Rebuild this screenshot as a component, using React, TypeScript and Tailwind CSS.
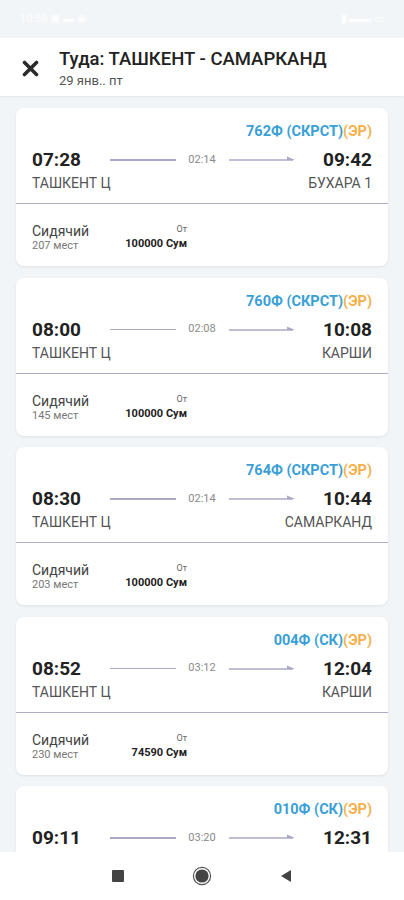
import React from "react";

type Trip = {
  code: string;
  kind: string;
  dep: string;
  arr: string;
  duration: string;
  from: string;
  to: string;
  seats: number;
  price: string;
};

const trips: Trip[] = [
  { code: "762Ф", kind: "(СКРСТ)", dep: "07:28", arr: "09:42", duration: "02:14", from: "ТАШКЕНТ Ц", to: "БУХАРА 1", seats: 207, price: "100000" },
  { code: "760Ф", kind: "(СКРСТ)", dep: "08:00", arr: "10:08", duration: "02:08", from: "ТАШКЕНТ Ц", to: "КАРШИ", seats: 145, price: "100000" },
  { code: "764Ф", kind: "(СКРСТ)", dep: "08:30", arr: "10:44", duration: "02:14", from: "ТАШКЕНТ Ц", to: "САМАРКАНД", seats: 203, price: "100000" },
  { code: "004Ф", kind: "(СК)", dep: "08:52", arr: "12:04", duration: "03:12", from: "ТАШКЕНТ Ц", to: "КАРШИ", seats: 230, price: "74590" },
  { code: "010Ф", kind: "(СК)", dep: "09:11", arr: "12:31", duration: "03:20", from: "ТАШКЕНТ Ц", to: "САМАРКАНД", seats: 198, price: "74590" },
];

function Arrow() {
  return (
    <svg width="66" height="8" viewBox="0 0 66 8">
      <line x1="0" y1="4" x2="64" y2="4" stroke="#a9a9c6" strokeWidth="1.6" />
      <path d="M58 0.5 L66 4 L58 4 Z" fill="#a9a9c6" />
    </svg>
  );
}

function TripCard({ trip }: { trip: Trip }) {
  return (
    <div className="shrink-0 h-[158px] rounded-lg bg-white shadow-[0_1px_3px_rgba(0,0,0,0.08)] overflow-hidden">
      <div className="px-4 pt-[14px] pb-[11px] border-b-[1.5px] border-[#adadc8]">
        <div className="h-5 leading-5 text-right text-[14.5px] font-bold">
          <span className="text-[#3a9fd6]">
            {trip.code} {trip.kind}
          </span>
          <span className="text-[#f5b04c]">(ЭР)</span>
        </div>
        <div className="mt-[6px] grid grid-cols-[1fr_185px_1fr] items-center h-6">
          <span className="text-[19px] font-bold text-[#222] leading-6">{trip.dep}</span>
          <div className="flex items-center justify-between">
            <div className="w-[66px] h-[1.6px] bg-[#a9a9c6]" />
            <span className="text-[11px] text-[#8a8a8a]">{trip.duration}</span>
            <Arrow />
          </div>
          <span className="text-right text-[19px] font-bold text-[#222] leading-6">{trip.arr}</span>
        </div>
        <div className="mt-[2px] flex justify-between text-[14px] leading-[18px] text-[#555]">
          <span>{trip.from}</span>
          <span>{trip.to}</span>
        </div>
      </div>
      <div className="flex px-4 pt-[19px]">
        <div className="w-[84px]">
          <div className="text-[14px] leading-4 text-[#444]">Сидячий</div>
          <div className="text-[11px] leading-[13px] text-[#777]">{trip.seats} мест</div>
        </div>
        <div className="w-[71px] text-right">
          <div className="text-[9px] leading-[13px] text-[#666]">От</div>
          <div className="text-[11px] leading-[16px] font-bold text-[#222]">{trip.price} Сум</div>
        </div>
      </div>
    </div>
  );
}

export default function App() {
  return (
    <div className="h-[900px] w-full flex flex-col overflow-hidden bg-[#f2f5f8] font-['Roboto',sans-serif]">
      <div className="h-[38px] shrink-0 flex items-center justify-between px-5 text-[11px] text-white/80">
        <span>10:56 ▣ ▬ ◉</span>
        <span>▮ ▬▬ ▭</span>
      </div>
      <header className="h-[58px] shrink-0 bg-white flex items-center shadow-[0_1px_2px_rgba(0,0,0,0.06)] z-10">
        <div className="w-[59px] flex justify-center pl-[2px] pt-[2px]">
          <svg width="17" height="17" viewBox="0 0 17 17">
            <path d="M2.5 2.5 L14.5 14.5 M14.5 2.5 L2.5 14.5" stroke="#2b2b2b" strokeWidth="3.6" strokeLinecap="round" />
          </svg>
        </div>
        <div className="flex flex-col pt-[3px]">
          <span className="text-[18.5px] leading-[22px] font-medium text-[#222]">Туда: ТАШКЕНТ - САМАРКАНД</span>
          <span className="text-[13px] leading-4 text-[#555] mt-[3px]">29 янв.. пт</span>
        </div>
      </header>
      <main className="flex-1 overflow-hidden px-4 pt-3 flex flex-col gap-[11.5px]">
        {trips.map((t) => (
          <TripCard key={t.code} trip={t} />
        ))}
      </main>
      <nav className="h-[48px] shrink-0 bg-white flex items-center justify-center gap-[68px]">
        <div className="w-[12px] h-[12px] bg-[#444] rounded-[1px]" />
        <svg width="20" height="20" viewBox="0 0 20 20">
          <circle cx="10" cy="10" r="8.6" fill="none" stroke="#555" strokeWidth="1.2" />
          <circle cx="10" cy="10" r="6.6" fill="#444" />
        </svg>
        <svg width="12" height="14" viewBox="0 0 12 14">
          <path d="M11 1 L1 7 L11 13 Z" fill="#444" />
        </svg>
      </nav>
    </div>
  );
}
